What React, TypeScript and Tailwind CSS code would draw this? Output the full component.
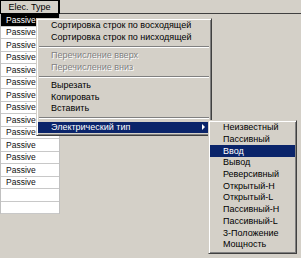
import React from 'react'

const rows = Array.from({ length: 16 }, (_, i) => (i < 14 ? 'Passive' : ''))

const subItems = [
    'Неизвестный',
    'Пассивный',
    'Ввод',
    'Вывод',
    'Реверсивный',
    'Открытый-H',
    'Открытый-L',
    'Пассивный-H',
    'Пассивный-L',
    '3-Положение',
    'Мощность',
]

const Sep = () => (
    <div className="h-[7px] flex flex-col justify-center px-[1px]">
        <div className="h-[1px] bg-[#808080]" />
        <div className="h-[1px] bg-white" />
    </div>
)

const Item = ({ label, disabled, active, arrow }: { label: string; disabled?: boolean; active?: boolean; arrow?: boolean }) => (
    <div
        className={`h-[11.5px] flex items-center justify-between pl-[13px] pr-[5px] text-[9px] leading-none whitespace-nowrap ${active ? 'bg-[#0a246a] text-white' : disabled ? 'text-[#808080] [text-shadow:1px_1px_0_#fff]' : 'text-black'}`}
    >
        <span>{label}</span>
        {arrow && (
            <span className="w-0 h-0 border-y-[3px] border-y-transparent border-l-[3px] border-l-white" />
        )}
    </div>
)

const App = () => {
    return (
        <div className="relative w-[301px] h-[258px] bg-[#d4d0c8] overflow-hidden font-['Liberation_Sans',Arial,sans-serif]">
            {/* header bar */}
            <div className="h-[14px] flex border-b border-[#404040]">
                <div className="w-[60px] h-[14px] border border-black border-r-2 flex items-center justify-center text-[9px] leading-none text-black">
                    Elec. Type
                </div>
            </div>

            {/* column */}
            <div className="w-[60px] bg-white border-x border-[#c0c0c0]">
                {rows.map((r, i) => (
                    <div
                        key={i}
                        className={`h-[12.5px] border-b border-[#c8c8c8] flex items-center pl-[5px] text-[8.5px] leading-none ${i === 0 ? 'bg-black text-white' : 'text-[#111]'}`}
                    >
                        {r}
                    </div>
                ))}
            </div>

            {/* context menu */}
            <div className="absolute left-[36px] top-[18px] w-[176px] h-[118px] bg-[#d4d0c8] border border-t-[#d4d0c8] border-l-[#d4d0c8] border-r-[#404040] border-b-[#404040] shadow-[inset_1px_1px_0_#fff,inset_-1px_-1px_0_#808080] p-[1px] pt-[1px]">
                <Item label="Сортировка строк по восходящей" />
                <Item label="Сортировка строк по нисходящей" />
                <Sep />
                <Item label="Перечисление вверх" disabled />
                <Item label="Перечисление вниз" disabled />
                <Sep />
                <Item label="Вырезать" />
                <Item label="Копировать" />
                <Item label="Вставить" />
                <Sep />
                <Item label="Электрический тип" active arrow />
            </div>

            {/* submenu */}
            <div className="absolute left-[208px] top-[120px] w-[89px] h-[134px] bg-[#d4d0c8] border border-t-[#d4d0c8] border-l-[#d4d0c8] border-r-[#404040] border-b-[#404040] shadow-[inset_1px_1px_0_#fff,inset_-1px_-1px_0_#808080] p-[1px]">
                {subItems.map((s) => (
                    <div
                        key={s}
                        className={`h-[11.7px] flex items-center pl-[13px] text-[9px] leading-none whitespace-nowrap ${s === 'Ввод' ? 'bg-[#0a246a] text-white' : 'text-black'}`}
                    >
                        {s}
                    </div>
                ))}
            </div>
        </div>
    )
}

export default App
